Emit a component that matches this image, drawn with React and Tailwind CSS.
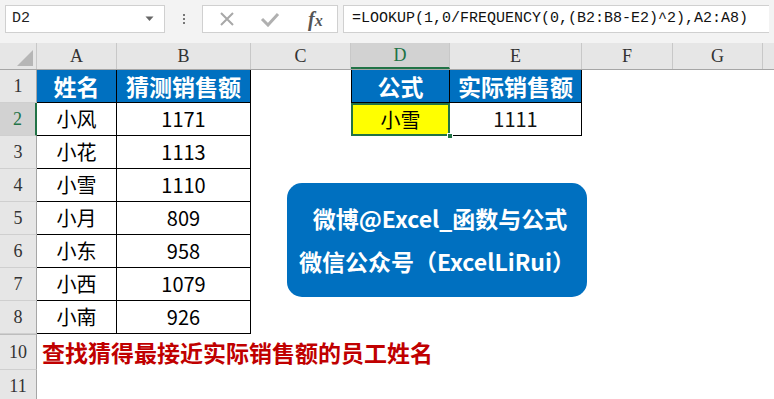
import React from "react"

const cols = [
  { key: "A", w: "w-[80px]" },
  { key: "B", w: "w-[134px]" },
  { key: "C", w: "w-[100px]" },
  { key: "D", w: "w-[99px]" },
  { key: "E", w: "w-[132px]" },
  { key: "F", w: "w-[91px]" },
  { key: "G", w: "w-[90px]" },
]

const people = [
  ["小风", "1171"],
  ["小花", "1113"],
  ["小雪", "1110"],
  ["小月", "809"],
  ["小东", "958"],
  ["小西", "1079"],
  ["小南", "926"],
]

const cjk = "font-['Microsoft_YaHei','Noto_Sans_CJK_SC',sans-serif]"

const RowHead = ({ n, selected, h = "h-[33px]", className = "" }) => (
  <div
    className={`w-[37px] shrink-0 ${h} flex items-center justify-center font-['Liberation_Serif',serif] text-[18px] border-b border-[#cfcfcf] ${className} ${
      selected
        ? "bg-[#d2d2d2] text-[#217346] border-r-2 border-r-[#217346]"
        : "bg-[#e6e6e6] text-[#333] border-r border-r-[#a6a6a6]"
    }`}
  >
    {n}
  </div>
)

const Cell = ({ w, className = "", children }) => (
  <div className={`${w} shrink-0 h-full flex items-center justify-center ${className}`}>{children}</div>
)

export default function App() {
  return (
    <div className="w-[774px] h-[399px] overflow-hidden bg-white relative">
      {/* formula bar */}
      <div className="h-[43px] bg-[#f3f3f3] flex items-start pt-[5px] px-[5px]">
        <div className="w-[160px] h-[28px] bg-white border border-[#d0d0d0] flex items-center justify-between px-[6px]">
          <span className="font-['Liberation_Mono',monospace] text-[15px] text-[#222]">D2</span>
          <svg width="9" height="6" viewBox="0 0 9 6" className="mr-[4px]">
            <path d="M0.5 0.5h8L4.5 5z" fill="#666" />
          </svg>
        </div>
        <div className="w-[37px] h-[28px] flex flex-col items-center justify-center gap-[2px]">
          <span className="w-[2px] h-[2px] bg-[#777]" />
          <span className="w-[2px] h-[2px] bg-[#777]" />
          <span className="w-[2px] h-[2px] bg-[#777]" />
        </div>
        <div className="w-[136px] h-[28px] bg-white border border-[#d0d0d0] flex items-center">
          <svg width="16" height="16" viewBox="0 0 16 16" className="ml-[16px]">
            <path d="M2 2L14 14M14 2L2 14" stroke="#a8a8a8" strokeWidth="2" />
          </svg>
          <svg width="20" height="16" viewBox="0 0 20 16" className="ml-[25px]">
            <path d="M2 8L8 14L18 3" stroke="#b0b0b0" strokeWidth="3" fill="none" />
          </svg>
          <span className="ml-[28px] font-['Liberation_Serif',serif] italic font-bold text-[20px] text-[#555] leading-none">
            f<span className="text-[16px]">x</span>
          </span>
        </div>
        <div className="ml-[5px] flex-1 h-[28px] bg-white border border-[#d0d0d0] border-r-0 flex items-center pl-[8px]">
          <span className="font-['Liberation_Mono',monospace] text-[15px] text-[#111] whitespace-nowrap">
            =LOOKUP(1,0/FREQUENCY(0,(B2:B8-E2)^2),A2:A8)
          </span>
        </div>
      </div>

      {/* column headers */}
      <div className="h-[27px] flex bg-[#e6e6e6] border-b border-[#a6a6a6]">
        <div className="w-[37px] shrink-0 h-full relative border-r border-[#c8c8c8]">
          <svg width="16" height="16" viewBox="0 0 16 16" className="absolute right-[3px] bottom-[3px]">
            <path d="M16 0V16H0z" fill="#b6b6b6" />
          </svg>
        </div>
        {cols.map((c) => (
          <div
            key={c.key}
            className={`${c.w} shrink-0 h-full flex items-center justify-center font-['Liberation_Serif',serif] text-[18px] border-r border-[#c8c8c8] ${
              c.key === "D" ? "bg-[#d2d2d2] text-[#217346] border-b-2 border-b-[#217346]" : "text-[#333]"
            }`}
          >
            {c.key}
          </div>
        ))}
        <div className="flex-1" />
      </div>

      {/* row 1 */}
      <div className="h-[33px] flex">
        <RowHead n="1" />
        <Cell w="w-[80px]" className={`bg-[#0070c0] text-white font-bold text-[23px] border-r border-b border-black ${cjk}`}>
          姓名
        </Cell>
        <Cell w="w-[134px]" className={`bg-[#0070c0] text-white font-bold text-[23px] border-r border-b border-black ${cjk}`}>
          猜测销售额
        </Cell>
        <Cell w="w-[100px]" />
        <Cell w="w-[99px]" className={`bg-[#0070c0] text-white font-bold text-[23px] border-x border-b border-black ${cjk}`}>
          公式
        </Cell>
        <Cell w="w-[132px]" className={`bg-[#0070c0] text-white font-bold text-[23px] border-r border-b border-black ${cjk}`}>
          实际销售额
        </Cell>
      </div>

      {people.map(([name, val], i) => (
        <div key={name} className="h-[33px] flex">
          <RowHead n={i + 2} selected={i === 0} />
          <Cell w="w-[80px]" className={`text-[20px] text-black border-r border-b border-black ${cjk}`}>
            {name}
          </Cell>
          <Cell w="w-[134px]" className={`text-[20px] text-black border-r border-b border-black ${cjk}`}>
            {val}
          </Cell>
          {i === 0 && (
            <>
              <Cell w="w-[100px]" />
              <div className="w-[99px] shrink-0 h-full relative">
                <div className={`h-full bg-[#ffff00] border-2 border-[#217346] flex items-center justify-center text-[20px] ${cjk}`}>
                  小雪
                </div>
                <span className="absolute right-[-3px] bottom-[-3px] w-[6px] h-[6px] bg-[#217346] border border-white" />
              </div>
              <Cell w="w-[132px]" className={`text-[20px] text-[#111] border-r border-b border-black ${cjk}`}>
                1111
              </Cell>
            </>
          )}
        </div>
      ))}

      {/* row 10 (row 9 hidden) */}
      <div className="h-[36px] flex">
        <RowHead n="10" h="h-[36px]" className="border-t border-t-[#bdbdbd]" />
        <div className={`pl-[5px] flex items-center text-[23px] font-bold text-[#c00000] whitespace-nowrap ${cjk}`}>
          查找猜得最接近实际销售额的员工姓名
        </div>
      </div>
      <div className="h-[33px] flex">
        <RowHead n="11" />
      </div>

      {/* floating shape */}
      <div
        className={`absolute left-[287px] top-[183px] w-[300px] h-[114px] rounded-[15px] bg-[#0070c0] flex flex-col items-center justify-center text-white font-bold text-[23px] leading-[43px] ${cjk}`}
      >
        <div className="pl-[6px]">微博@Excel_函数与公式</div>
        <div>微信公众号（ExcelLiRui）</div>
      </div>
    </div>
  )
}
